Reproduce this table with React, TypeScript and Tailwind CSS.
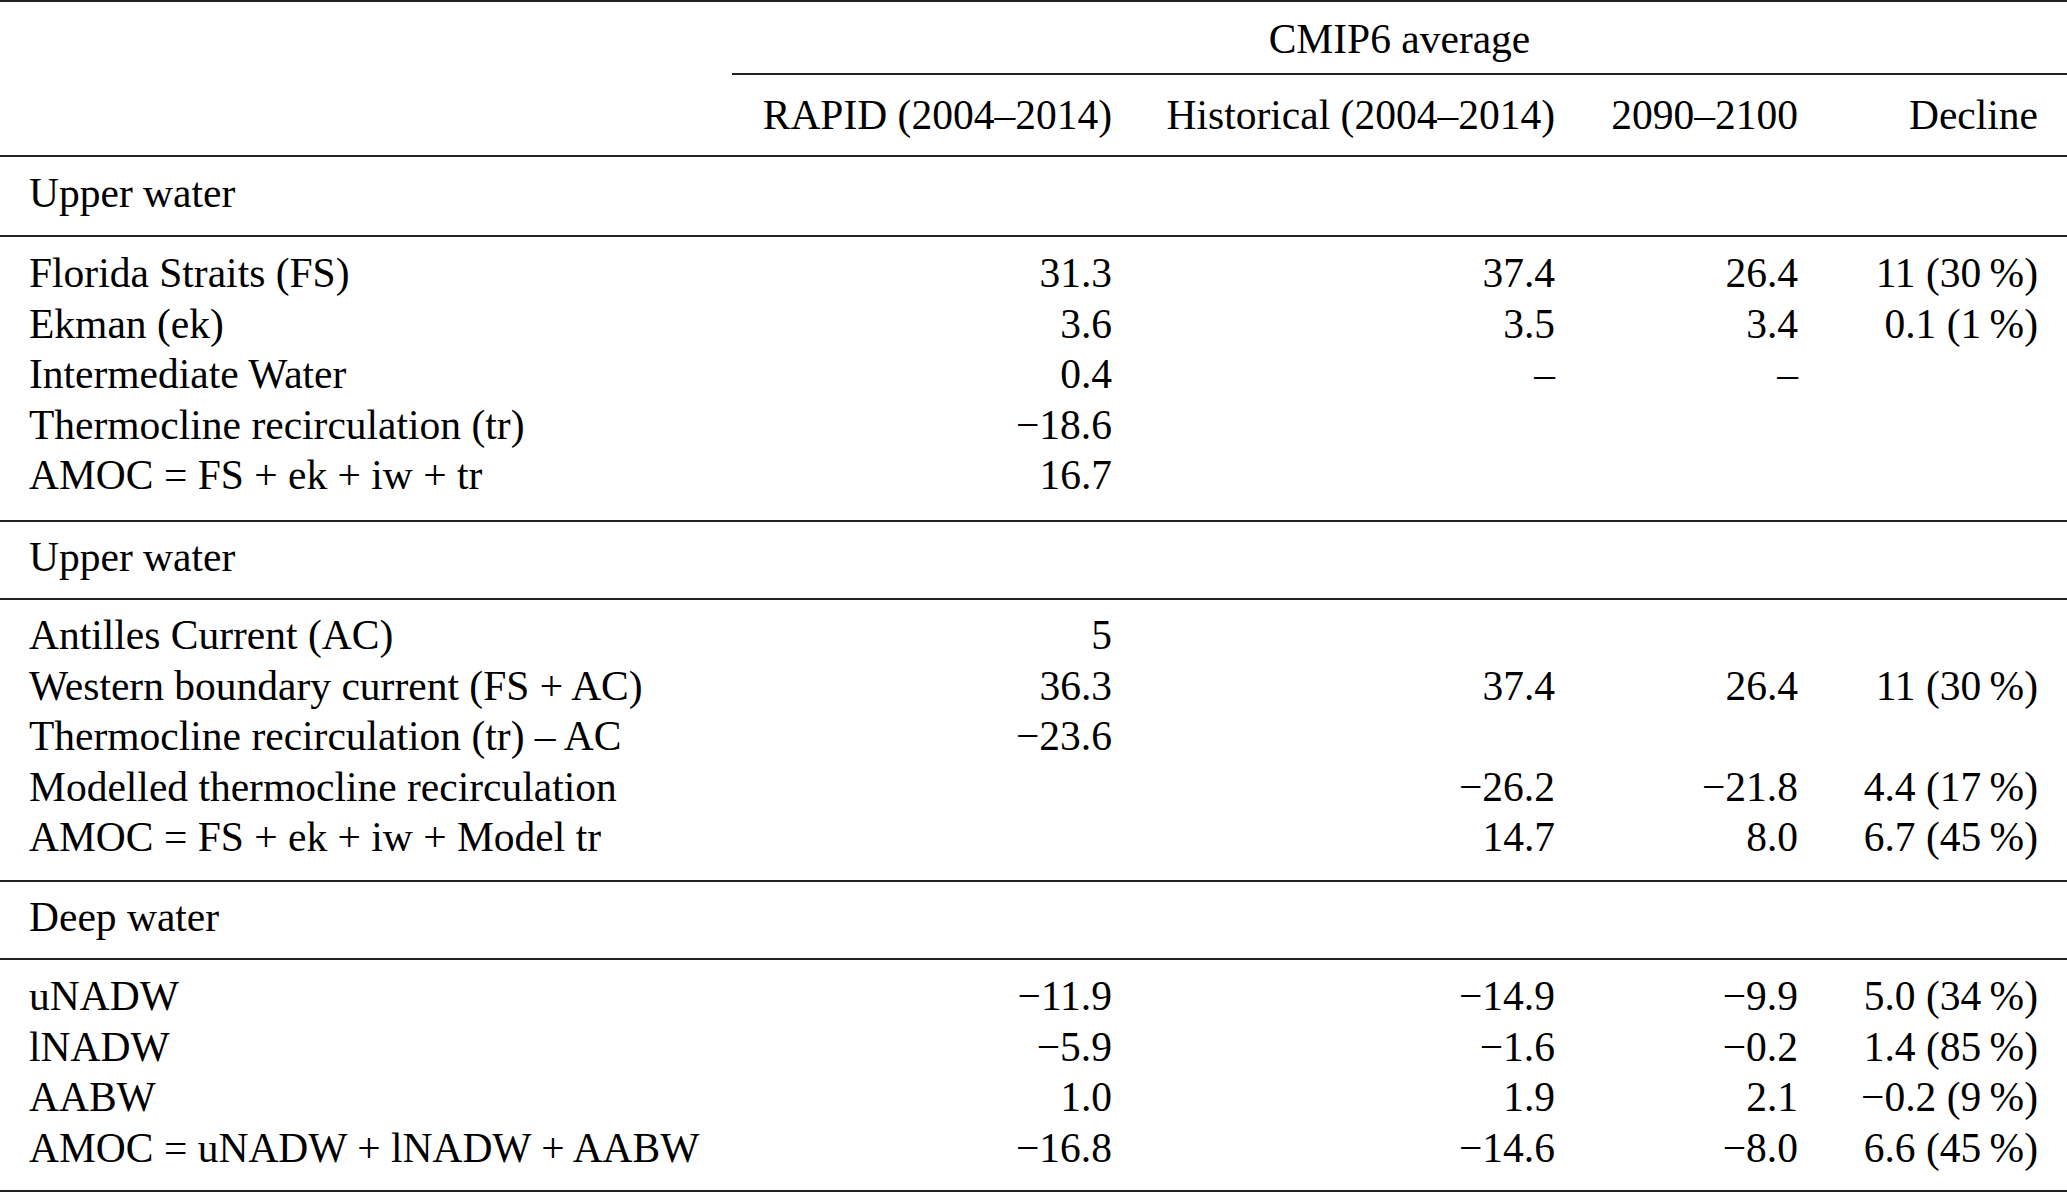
type Row = { label: string; vals: string[] };

type Section = {
  title: string;
  headPad: string;
  bodyPad: string;
  rows: Row[];
};

const sections: Section[] = [
  {
    title: 'Upper water',
    headPad: 'pt-[11px] pb-[16.5px]',
    bodyPad: 'pt-[11px] pb-[19.5px]',
    rows: [
      { label: 'Florida Straits (FS)', vals: ['31.3', '37.4', '26.4', '11 (30\u2009%)'] },
      { label: 'Ekman (ek)', vals: ['3.6', '3.5', '3.4', '0.1 (1\u2009%)'] },
      { label: 'Intermediate Water', vals: ['0.4', '\u2013', '\u2013', ''] },
      { label: 'Thermocline recirculation (tr)', vals: ['\u221218.6', '', '', ''] },
      { label: 'AMOC = FS + ek + iw + tr', vals: ['16.7', '', '', ''] },
    ],
  },
  {
    title: 'Upper water',
    headPad: 'pt-[10px] pb-[15.5px]',
    bodyPad: 'pt-[10px] pb-[17.5px]',
    rows: [
      { label: 'Antilles Current (AC)', vals: ['5', '', '', ''] },
      { label: 'Western boundary current (FS + AC)', vals: ['36.3', '37.4', '26.4', '11 (30\u2009%)'] },
      { label: 'Thermocline recirculation (tr) \u2013 AC', vals: ['\u221223.6', '', '', ''] },
      { label: 'Modelled thermocline recirculation', vals: ['', '\u221226.2', '\u221221.8', '4.4 (17\u2009%)'] },
      { label: 'AMOC = FS + ek + iw + Model tr', vals: ['', '14.7', '8.0', '6.7 (45\u2009%)'] },
    ],
  },
  {
    title: 'Deep water',
    headPad: 'pt-[10px] pb-[15.5px]',
    bodyPad: 'pt-[11px] pb-[17px]',
    rows: [
      { label: 'uNADW', vals: ['\u221211.9', '\u221214.9', '\u22129.9', '5.0 (34\u2009%)'] },
      { label: 'lNADW', vals: ['\u22125.9', '\u22121.6', '\u22120.2', '1.4 (85\u2009%)'] },
      { label: 'AABW', vals: ['1.0', '1.9', '2.1', '\u22120.2 (9\u2009%)'] },
      { label: 'AMOC = uNADW + lNADW + AABW', vals: ['\u221216.8', '\u221214.6', '\u22128.0', '6.6 (45\u2009%)'] },
    ],
  },
];

const headers = ['RAPID (2004\u20132014)', 'Historical (2004\u20132014)', '2090\u20132100', 'Decline'];

function DataRow({ row }: { row: Row }) {
  return (
    <div className="grid grid-cols-[732px_407px_443px_243px_242px] h-[50.5px] leading-[50.5px] whitespace-nowrap">
      <div className="pl-[29px]">{row.label}</div>
      {row.vals.map((v, i) => (
        <div key={i} className={i === 3 ? 'text-right pr-[29px]' : 'text-right pr-[27px]'}>
          {v}
        </div>
      ))}
    </div>
  );
}

export default function App() {
  return (
    <div className="min-h-screen bg-white">
      <div className="w-[2067px] border-t-2 border-b-2 border-[#222] text-[41.5px] text-black font-['Liberation_Serif','Times_New_Roman',serif]">
        {/* cabecera */}
        <div className="border-b-2 border-[#222]">
          <div className="grid grid-cols-[732px_407px_443px_243px_242px]">
            <div />
            <div className="col-span-4 text-center pt-[11.5px] pb-[9px] h-[73px] leading-[50.5px] border-b-2 border-[#222]">
              CMIP6 average
            </div>
          </div>
          <div className="grid grid-cols-[732px_407px_443px_243px_242px] pt-[14.5px] pb-[15px] leading-[50.5px] whitespace-nowrap">
            <div />
            {headers.map((h, i) => (
              <div key={h} className={i === 3 ? 'text-right pr-[29px]' : 'text-right pr-[27px]'}>
                {h}
              </div>
            ))}
          </div>
        </div>

        {sections.map((s, idx) => (
          <div key={idx} className={idx < sections.length - 1 ? 'border-b-2 border-[#222]' : ''}>
            <div className={`${s.headPad} border-b-2 border-[#222]`}>
              <div className="pl-[29px] h-[50.5px] leading-[50.5px]">{s.title}</div>
            </div>
            <div className={s.bodyPad}>
              {s.rows.map((r) => (
                <DataRow key={r.label} row={r} />
              ))}
            </div>
          </div>
        ))}
      </div>
    </div>
  );
}
